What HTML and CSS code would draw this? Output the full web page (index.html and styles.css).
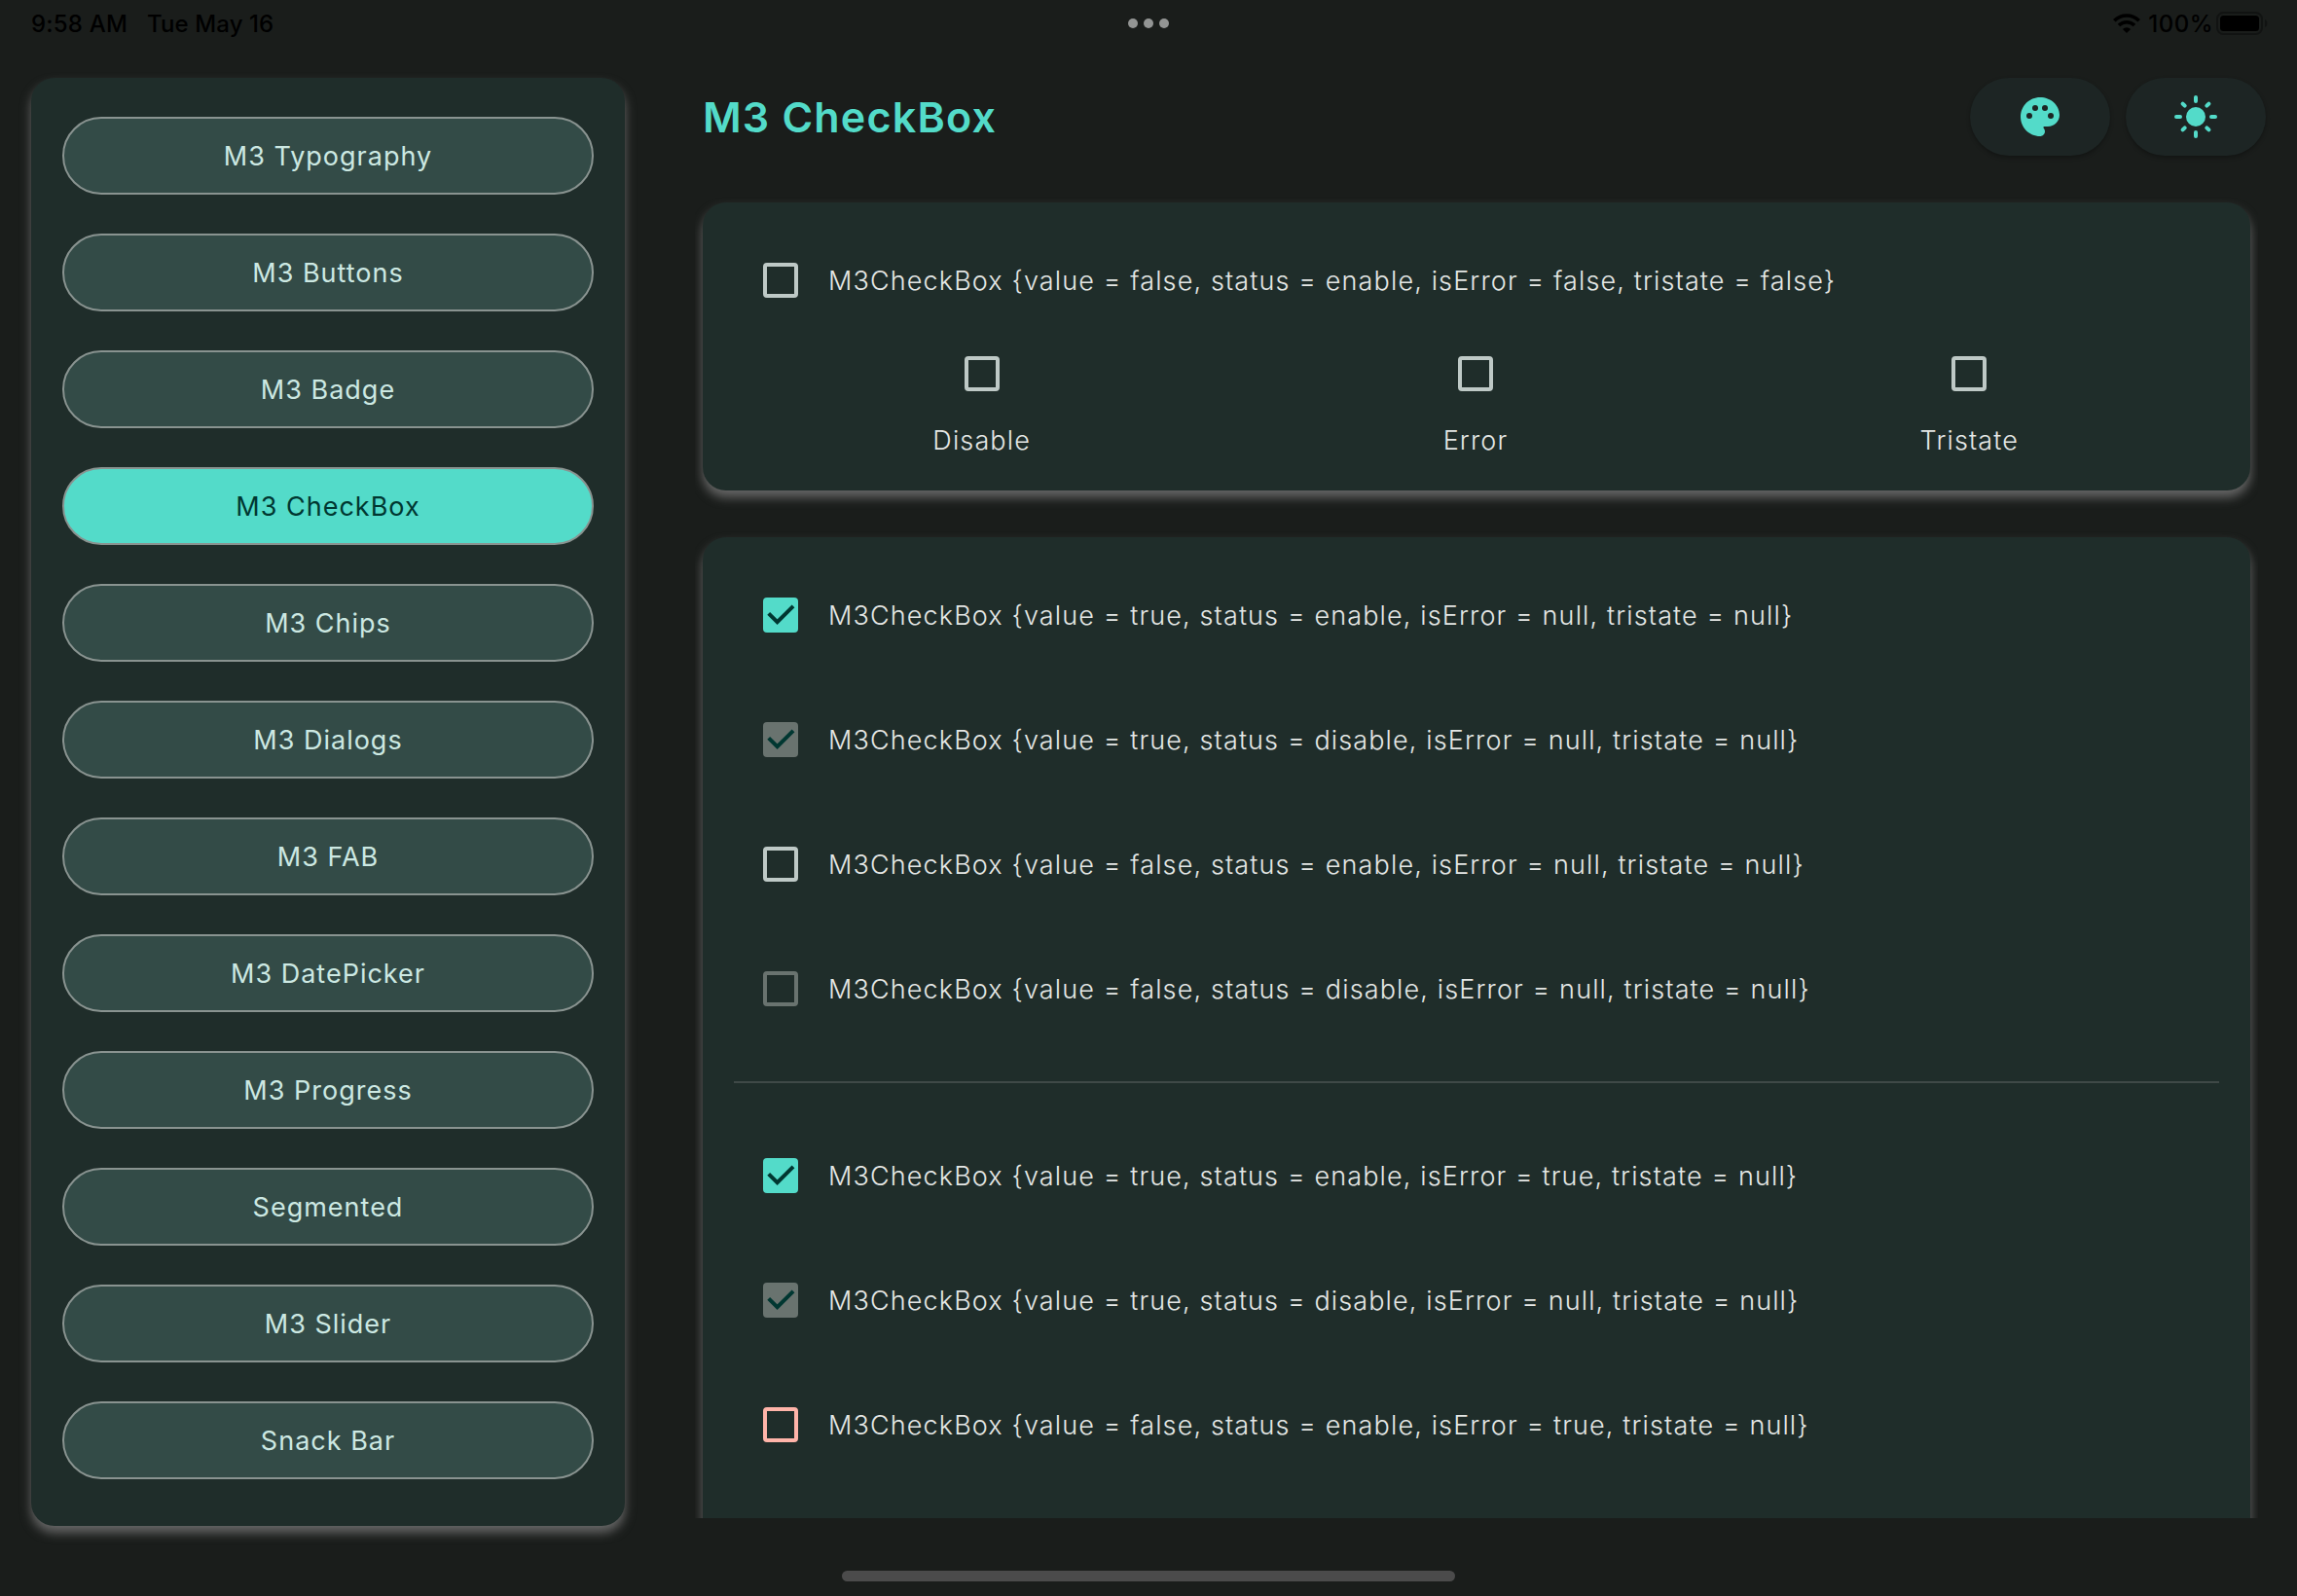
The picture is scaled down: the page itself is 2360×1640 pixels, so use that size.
FILE: index.html
```
<!DOCTYPE html>
<html lang="en">
<head>
<meta charset="utf-8">
<title>M3 CheckBox</title>
<link rel="stylesheet" href="styles.css">
</head>
<body>
<svg class="defs" aria-hidden="true">
  <symbol id="tick" viewBox="0 0 36 36"><path d="M5.7 16.3 14.6 25.2 31 8.8" fill="none" stroke="#003731" stroke-width="4"/></symbol>
</svg>
<div class="screen">
  <header class="status">
    <div class="status-left"><span>9:58 AM</span><span class="date">Tue May 16</span></div>
    <div class="dots"><i></i><i></i><i></i></div>
    <div class="status-right">
      <svg class="wifi" width="28" height="20" viewBox="0 0 28 20">
        <g fill="none" stroke="#000" stroke-width="3.6">
          <path d="M1.3 7.2a18 18 0 0 1 25.4 0"/>
          <path d="M6 12a11.3 11.3 0 0 1 16 0"/>
        </g>
        <path d="M14 20 9.9 15.9a5.8 5.8 0 0 1 8.2 0Z"/>
      </svg>
      <span class="percent">100%</span>
      <svg class="battery" width="53" height="24" viewBox="0 0 53 24">
        <rect x="1" y="1" width="46" height="22" rx="6.5" fill="none" stroke="#111312" stroke-width="2"/>
        <rect x="4" y="4" width="40" height="16" rx="3.5"/>
        <path d="M50 8c3.2 1.2 3.2 6.8 0 8z" fill="#111312"/>
      </svg>
    </div>
  </header>

  <div class="body">
    <nav class="sidebar">
      <a class="nav-item">M3 Typography</a>
      <a class="nav-item">M3 Buttons</a>
      <a class="nav-item">M3 Badge</a>
      <a class="nav-item active">M3 CheckBox</a>
      <a class="nav-item">M3 Chips</a>
      <a class="nav-item">M3 Dialogs</a>
      <a class="nav-item">M3 FAB</a>
      <a class="nav-item">M3 DatePicker</a>
      <a class="nav-item">M3 Progress</a>
      <a class="nav-item">Segmented</a>
      <a class="nav-item">M3 Slider</a>
      <a class="nav-item">Snack Bar</a>
    </nav>

    <main class="main">
      <div class="topbar">
        <h1>M3 CheckBox</h1>
        <div class="actions">
          <button class="action" aria-label="Palette">
            <svg width="48" height="48" viewBox="0 0 24 24"><path fill="#53dbc9" d="M12 2C6.49 2 2 6.49 2 12s4.49 10 10 10c1.38 0 2.5-1.12 2.5-2.5 0-.61-.23-1.2-.64-1.67-.08-.1-.13-.21-.13-.33 0-.28.22-.5.5-.5H16c3.31 0 6-2.69 6-6C22 6.04 17.51 2 12 2z"/><g fill="#1d2524"><circle cx="6.5" cy="11.5" r="1.5"/><circle cx="9.5" cy="7.5" r="1.5"/><circle cx="14.5" cy="7.5" r="1.5"/><circle cx="17.5" cy="11.5" r="1.5"/></g></svg>
          </button>
          <button class="action" aria-label="Brightness">
            <svg width="48" height="48" viewBox="0 0 24 24"><circle cx="12" cy="12" r="5" fill="#53dbc9"/><path d="M12 2v2M12 20v2M2 12h2M20 12h2M5.29 5.29l1.06 1.06M17.65 17.65l1.06 1.06M5.29 18.71l1.06-1.06M17.65 6.35l1.06-1.06" stroke="#53dbc9" stroke-width="2" stroke-linecap="round"/></svg>
          </button>
        </div>
      </div>

      <div class="scroller">
        <section class="card demo">
          <div class="row"><span class="box"></span><span>M3CheckBox {value = false, status = enable, isError = false, tristate = false}</span></div>
          <div class="options">
            <div class="option"><span class="box"></span><span>Disable</span></div>
            <div class="option"><span class="box"></span><span>Error</span></div>
            <div class="option"><span class="box"></span><span>Tristate</span></div>
          </div>
        </section>

        <section class="card list">
          <div class="row"><span class="box checked"><svg><use href="#tick"/></svg></span><span>M3CheckBox {value = true, status = enable, isError = null, tristate = null}</span></div>
          <div class="row"><span class="box checked disabled"><svg><use href="#tick"/></svg></span><span>M3CheckBox {value = true, status = disable, isError = null, tristate = null}</span></div>
          <div class="row"><span class="box"></span><span>M3CheckBox {value = false, status = enable, isError = null, tristate = null}</span></div>
          <div class="row"><span class="box disabled"></span><span>M3CheckBox {value = false, status = disable, isError = null, tristate = null}</span></div>
          <hr>
          <div class="row"><span class="box checked"><svg><use href="#tick"/></svg></span><span>M3CheckBox {value = true, status = enable, isError = true, tristate = null}</span></div>
          <div class="row"><span class="box checked disabled"><svg><use href="#tick"/></svg></span><span>M3CheckBox {value = true, status = disable, isError = null, tristate = null}</span></div>
          <div class="row"><span class="box error"></span><span>M3CheckBox {value = false, status = enable, isError = true, tristate = null}</span></div>
        </section>
      </div>
    </main>
  </div>

  <div class="home-indicator"></div>
</div>
</body>
</html>
```
FILE: styles.css
```
* { box-sizing: border-box; }

body {
  margin: 0;
  background: #1a1d1b;
  font-family: Inter, "Liberation Sans", sans-serif;
}

.defs { display: none; }

.screen {
  width: 2360px;
  height: 1640px;
  display: flex;
  flex-direction: column;
  overflow: hidden;
}

/* Status bar */
.status {
  flex: none;
  height: 48px;
  padding: 0 30px 0 32px;
  display: grid;
  grid-template-columns: 1fr auto 1fr;
  align-items: center;
  color: #000;
  font-size: 24px;
  font-weight: 500;
}
.status-left { display: flex; gap: 20px; letter-spacing: 0.2px; }
.date { letter-spacing: 0.1px; }
.dots { display: flex; gap: 6px; margin-right: 2px; }
.dots i { width: 10px; height: 10px; border-radius: 50%; background: #939594; }
.status-right { display: flex; align-items: center; justify-content: flex-end; }
.percent { margin: 0 3px 0 8px; letter-spacing: 0.5px; }

/* Two-pane body */
.body {
  flex: none;
  height: 1512px;
  display: flex;
  gap: 80px;
  padding: 32px 32px 0;
}

.sidebar {
  flex: none;
  width: 610px;
  height: 1488px;
  margin-bottom: -8px;
  padding: 40px 32px;
  border-radius: 24px;
  background: #1f2d2a;
  box-shadow: 0 7px 11px #666;
  display: flex;
  flex-direction: column;
  gap: 40px;
}
.nav-item {
  height: 80px;
  display: flex;
  align-items: center;
  justify-content: center;
  border: 2px solid #899390;
  border-radius: 40px;
  background: #334b47;
  color: #cce8e2;
  font-size: 27px;
  font-weight: 400;
  letter-spacing: 1px;
}
.nav-item.active { background: #53dbc9; color: #003731; }

.main { flex: 1; display: flex; flex-direction: column; min-width: 0; }

.topbar {
  flex: none;
  height: 80px;
  display: flex;
  align-items: center;
  justify-content: space-between;
}
h1 {
  margin: 0;
  color: #53dbc9;
  font-size: 43px;
  font-weight: 600;
  letter-spacing: 1.2px;
}
.actions { display: flex; gap: 16px; }
.action {
  width: 144px;
  height: 80px;
  padding: 0;
  border: 0;
  border-radius: 40px;
  background: #1d2524;
  box-shadow: 0 2px 4px rgba(0, 0, 0, 0.3);
  display: flex;
  align-items: center;
  justify-content: center;
}

/* Scrolling column of cards, cut at the viewport edge */
.scroller {
  flex: 1;
  min-height: 0;
  margin: 32px 8px 0 -8px;
  padding: 16px 8px 0;
  overflow: hidden;
}
.card {
  border-radius: 24px;
  background: #1f2d2a;
  box-shadow: 0 7px 11px #666;
  color: #e4e7e5;
  font-size: 27px;
  font-weight: 300;
  letter-spacing: 1.13px;
  white-space: nowrap;
}
.demo { height: 296px; padding: 16px 32px; }
.list { height: 1200px; margin-top: 48px; padding: 16px 32px; }

.row {
  height: 128px;
  padding-left: 30px;
  display: flex;
  align-items: center;
  gap: 31px;
}
.list hr {
  height: 2px;
  margin: 31px 0;
  border: 0;
  background: #3f4947;
}

.options {
  display: grid;
  grid-template-columns: repeat(3, 1fr);
  margin: 14px 3px 0 1px;
}
.option { display: flex; flex-direction: column; align-items: center; gap: 34px; }

.box {
  flex: none;
  width: 36px;
  height: 36px;
  border: 4px solid #bec9c6;
  border-radius: 4px;
}
.box.disabled { border-color: #69736f; }
.box.error { border-color: #ffb4a9; }
.box.checked { border: 0; background: #53dbc9; }
.box.checked.disabled { background: #69736f; }
.box svg { display: block; width: 36px; height: 36px; }

.home-indicator {
  width: 630px;
  height: 11px;
  margin: 54px auto 0;
  border-radius: 6px;
  background: #4b4b4b;
}
```
